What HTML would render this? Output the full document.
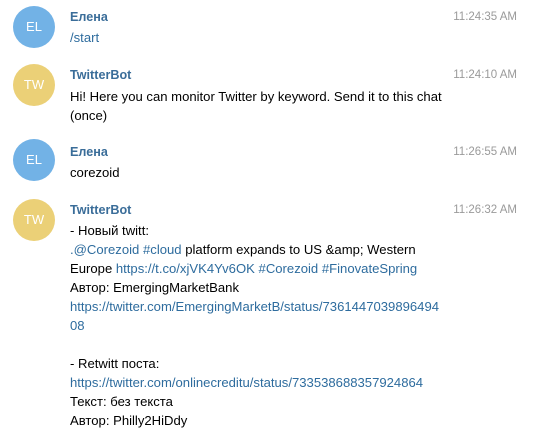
<!DOCTYPE html>
<html><head><meta charset="utf-8"><style>
body{margin:0;width:538px;height:441px;background:#fff;position:relative;overflow:hidden;font-family:"Liberation Sans","DejaVu Sans",sans-serif;font-size:13.1px;color:#000}
.av{position:absolute;left:13px;width:42px;height:42px;border-radius:50%;color:#fff;font-size:13px;text-align:center;line-height:42px}
.el{background:#72b2e6}.tw{background:#ebd077}
.l{position:absolute;left:70px;line-height:16px;white-space:nowrap}
.n{font-weight:bold;color:#3a6d99;font-size:12.6px}
.t{position:absolute;right:21px;color:#9a9a9a;font-size:11.5px;line-height:16px}
a{color:#2e6c9e;text-decoration:none}
</style></head><body>
<div class="av el" style="top:6px">EL</div>
<div class="l n" style="top:9px">Елена</div><div class="t" style="top:9px">11:24:35 AM</div>
<div class="l" style="top:30px"><a>/start</a></div>

<div class="av tw" style="top:64px">TW</div>
<div class="l n" style="top:67px">TwitterBot</div><div class="t" style="top:67px">11:24:10 AM</div>
<div class="l" style="top:89px">Hi! Here you can monitor Twitter by keyword. Send it to this chat</div>
<div class="l" style="top:108px">(once)</div>

<div class="av el" style="top:139px">EL</div>
<div class="l n" style="top:144px">Елена</div><div class="t" style="top:144px">11:26:55 AM</div>
<div class="l" style="top:165px">corezoid</div>

<div class="av tw" style="top:199px">TW</div>
<div class="l n" style="top:202px">TwitterBot</div><div class="t" style="top:202px">11:26:32 AM</div>
<div class="l" style="top:223px">- Новый twitt:</div>
<div class="l" style="top:242px"><a>.@Corezoid</a> <a>#cloud</a> platform expands to US &amp;amp; Western</div>
<div class="l" style="top:261px">Europe <a>https://t.co/xjVK4Yv6OK</a> <a>#Corezoid</a> <a>#FinovateSpring</a></div>
<div class="l" style="top:280px">Автор: EmergingMarketBank</div>
<div class="l" style="top:299px"><a>https://twitter.com/EmergingMarketB/status/7361447039896494</a></div>
<div class="l" style="top:318px"><a>08</a></div>
<div class="l" style="top:356px">- Retwitt поста:</div>
<div class="l" style="top:375px"><a>https://twitter.com/onlinecreditu/status/733538688357924864</a></div>
<div class="l" style="top:394px">Текст: без текста</div>
<div class="l" style="top:413px">Автор: Philly2HiDdy</div>
</body></html>
